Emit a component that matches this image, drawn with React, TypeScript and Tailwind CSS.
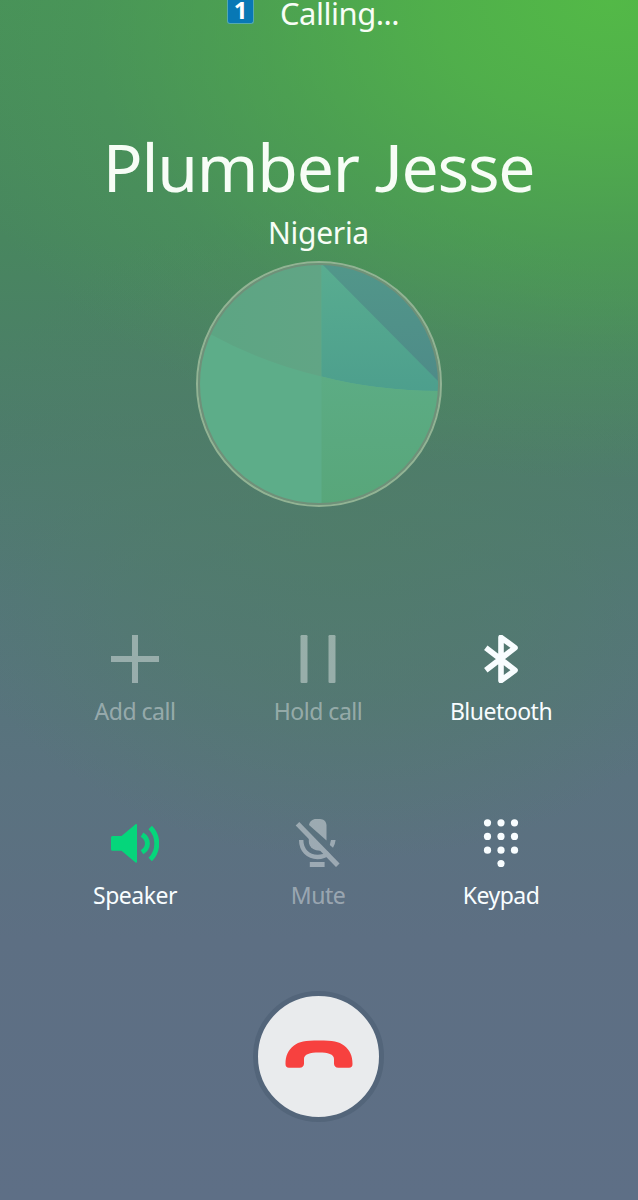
import React from 'react'

function AddIcon() {
  return (
    <svg className="h-12 w-12" viewBox="0 0 48 48" fill="currentColor">
      <path d="M21 0h6v21h21v6H27v21h-6V27H0v-6h21z" />
    </svg>
  )
}

function HoldIcon() {
  return (
    <svg className="h-12 w-12" viewBox="0 0 48 48" fill="currentColor">
      <rect x="6.5" y="0" width="7" height="48" rx="1.3" />
      <rect x="34.5" y="0" width="7" height="48" rx="1.3" />
    </svg>
  )
}

function BluetoothIcon() {
  return (
    <svg className="h-12 w-12" viewBox="0 0 48 48" fill="none" stroke="currentColor" strokeWidth="5.6" strokeLinejoin="round">
      <path d="M8.8 12.8L38 35.2L24 45.6V2.4L38 12.8L8.8 35.2" />
    </svg>
  )
}

function SpeakerIcon() {
  return (
    <svg className="h-12 w-12" viewBox="0 0 48 48" fill="none" stroke="currentColor" strokeWidth="4.9">
      <path d="M1.5 17H10.5L24.5 5.2Q26 4.6 26 6.2V42.6Q26 44.4 24.5 43.4L10.5 31.8H1.5Q0 31.8 0 30.3V18.5Q0 17 1.5 17Z" fill="currentColor" stroke="none" />
      <path d="M31 15.6Q36.4 19 36.4 24.4T31 33.2" />
      <path d="M39.2 8.4C48 17 48 32 39.2 40.6" />
    </svg>
  )
}

function MuteIcon() {
  return (
    <svg className="h-12 w-12" viewBox="0 0 48 48" fill="currentColor">
      <path d="M15 6C15.5 2.5 18.5 0 22 0H26C29.7 0 32.5 2.8 32.5 6.5V21.5Z" />
      <path d="M14.8 16L31 30.8C26 33 14.8 31.5 14.8 22Z" />
      <path d="M7.2 21C7.2 31 14 38 23.5 38Q30 38 35 34" fill="none" stroke="currentColor" strokeWidth="4.4" />
      <path d="M37 21H41.6Q41.2 25 39 28.8L35.8 26Z" />
      <path d="M3.5 4.7L43.8 46.3" stroke="currentColor" strokeWidth="5" />
      <rect x="15.8" y="43" width="14.8" height="5" />
    </svg>
  )
}

function KeypadIcon() {
  const dots = [
    [10.5, 3.8], [24, 3.8], [37.5, 3.8],
    [10.5, 17.4], [24, 17.4], [37.5, 17.4],
    [10.5, 31.2], [24, 31.2], [37.5, 31.2],
    [24, 44.6],
  ]
  return (
    <svg className="h-12 w-12" viewBox="0 0 48 48" fill="currentColor">
      {dots.map(([x, y]) => (
        <circle key={`${x}-${y}`} cx={x} cy={y} r="3.6" />
      ))}
    </svg>
  )
}

function Avatar() {
  return (
    <svg className="h-[246px] w-[246px]" viewBox="0 0 246 246">
      <defs>
        <clipPath id="disc">
          <circle cx="123" cy="123" r="120" />
        </clipPath>
        <linearGradient id="teal" x1="0" y1="0" x2="0" y2="1">
          <stop offset="0" stopColor="#59ad90" />
          <stop offset="1" stopColor="#4d9f8d" />
        </linearGradient>
        <linearGradient id="corner" x1="0" y1="0" x2="0" y2="1">
          <stop offset="0" stopColor="#52978a" />
          <stop offset="1" stopColor="#4e8b88" />
        </linearGradient>
        <linearGradient id="mint" x1="0" y1="0" x2="0" y2="1">
          <stop offset="0" stopColor="#5cac84" />
          <stop offset="1" stopColor="#58a67a" />
        </linearGradient>
        <linearGradient id="sage" x1="0" y1="0" x2="1" y2="0">
          <stop offset="0" stopColor="#5ca583" />
          <stop offset="1" stopColor="#61a585" />
        </linearGradient>
      </defs>
      <g clipPath="url(#disc)">
        <rect width="246" height="246" fill="#5dad89" />
        <path d="M0 0H125.5V115.5Q65 101 14 73L0 66Z" fill="url(#sage)" />
        <path d="M125.5 0H246V130Q181 130 125.5 115.5Z" fill="url(#teal)" />
        <path d="M123 0H246V124Z" fill="url(#corner)" />
        <path d="M125.5 115.5Q181 130 246 130V246H125.5Z" fill="url(#mint)" />
      </g>
      <circle cx="123" cy="123" r="120" fill="none" stroke="#6f9079" strokeWidth="2" />
      <circle cx="123" cy="123" r="122" fill="none" stroke="#92b394" strokeWidth="2" />
    </svg>
  )
}

const actions = [
  { label: 'Add call', icon: AddIcon, color: 'text-white/40' },
  { label: 'Hold call', icon: HoldIcon, color: 'text-white/40' },
  { label: 'Bluetooth', icon: BluetoothIcon, color: 'text-[#f8fdff]' },
  { label: 'Speaker', icon: SpeakerIcon, color: 'text-[#f8fdff]', iconColor: 'text-[#05d67b]' },
  { label: 'Mute', icon: MuteIcon, color: 'text-white/40' },
  { label: 'Keypad', icon: KeypadIcon, color: 'text-[#f8fdff]' },
]

// icons are drawn solid and faded as a whole so overlapping strokes stay even
const faded = 'text-white opacity-40'

export default function App() {
  return (
    <div className="flex h-[1200px] w-[638px] flex-col items-center overflow-hidden bg-[radial-gradient(ellipse_700px_480px_at_610px_0px,#53b947_0%,#52b747cc_25%,#4fae4a90_50%,#4ca45040_75%,#4ca45000_100%),radial-gradient(ellipse_420px_330px_at_350px_530px,#4f7e66b0_0%,#4f7e6670_50%,#4f7e6600_100%),linear-gradient(to_bottom,#48905a_0px,#48865f_240px,#4d7c6b_430px,#547679_600px,#5a727f_780px,#5d6f83_940px,#5e6f86_1200px)] pr-px font-['Noto_Sans',sans-serif] text-[#f7fdf6]">
      {/* Call status */}
      <div className="flex h-8 w-full shrink-0 items-start gap-[26px] pl-[227px]">
        <div className="h-6 w-[27px] rounded-b-[3px] border border-t-0 border-[#55a9b0] bg-[#0878b5] text-center font-['Open_Sans',sans-serif] text-[24px] leading-[19px] font-bold text-white">
          1
        </div>
        <span className="text-[31px] leading-[26px] tracking-[-0.5px]">Calling...</span>
      </div>

      {/* Contact */}
      <h1 className="mt-[94px] text-[66px] leading-20 tracking-[-1.2px] whitespace-nowrap">
        Plumber <span className="font-['Lato',sans-serif]">J</span>esse
      </h1>
      <p className="mt-[6px] text-[30px] leading-10 tracking-[-0.3px]">Nigeria</p>
      <div className="mt-2 shrink-0">
        <Avatar />
      </div>

      {/* Call controls */}
      <div className="mt-32 mr-px grid w-[549px] grid-cols-3 gap-y-[93px]">
        {actions.map(({ label, icon: Icon, color, iconColor }) => (
          <button key={label} className="flex flex-col items-center gap-[13px]">
            <span className={iconColor ?? (color === 'text-white/40' ? faded : color)}>
              <Icon />
            </span>
            <span className={`text-[23px] leading-[30px] tracking-[-0.5px] ${color}`}>{label}</span>
          </button>
        ))}
      </div>

      <button aria-label="End call" className="mt-[81px] flex h-[131px] w-[131px] shrink-0 items-center justify-center rounded-full border-5 border-[#53657a] bg-[#e9ebed] pb-[5px]">
        <svg className="h-7 w-[68px]" viewBox="0 0 68 28" fill="#f7413f">
          <path d="M34 0.5C48 0.5 54 1.6 59 5.5C65 10 67.5 16 67.5 24Q67.5 27.8 64 27.8H53.5Q49 27.5 49 23.5V19C49 14 43 12.5 34 12.5S19 14 19 19V23.5Q19 27.5 14.5 27.8H4Q.5 27.8.5 24C.5 16 3 10 9 5.5C14 1.6 20 .5 34 .5Z" />
        </svg>
      </button>
    </div>
  )
}
